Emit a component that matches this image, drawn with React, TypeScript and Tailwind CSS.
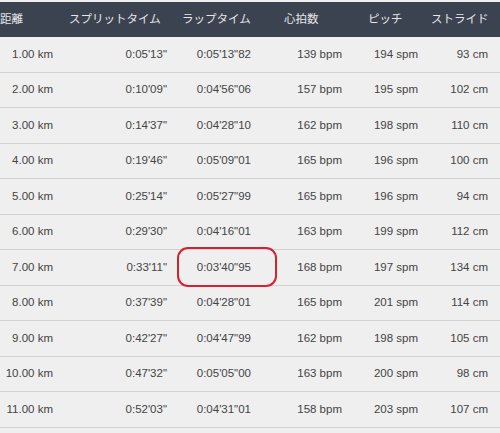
import React from "react";

const rows = [
  ["1.00 km", "0:05'13\"", "0:05'13\"82", "139 bpm", "194 spm", "93 cm"],
  ["2.00 km", "0:10'09\"", "0:04'56\"06", "157 bpm", "195 spm", "102 cm"],
  ["3.00 km", "0:14'37\"", "0:04'28\"10", "162 bpm", "198 spm", "110 cm"],
  ["4.00 km", "0:19'46\"", "0:05'09\"01", "165 bpm", "196 spm", "100 cm"],
  ["5.00 km", "0:25'14\"", "0:05'27\"99", "165 bpm", "196 spm", "94 cm"],
  ["6.00 km", "0:29'30\"", "0:04'16\"01", "163 bpm", "199 spm", "112 cm"],
  ["7.00 km", "0:33'11\"", "0:03'40\"95", "168 bpm", "197 spm", "134 cm"],
  ["8.00 km", "0:37'39\"", "0:04'28\"01", "165 bpm", "201 spm", "114 cm"],
  ["9.00 km", "0:42'27\"", "0:04'47\"99", "162 bpm", "198 spm", "105 cm"],
  ["10.00 km", "0:47'32\"", "0:05'05\"00", "163 bpm", "200 spm", "98 cm"],
  ["11.00 km", "0:52'03\"", "0:04'31\"01", "158 bpm", "203 spm", "107 cm"],
];

const dataPad = ["pr-[7px]", "pr-[8px]", "pr-[14px]", "pr-[8px]", "pr-[7px]", "pr-[12px]"];

export default function App() {
  return (
    <div
      className="w-[500px] h-[433px] overflow-hidden bg-[#efefef] pt-[2px]"
      style={{ fontFamily: '"Liberation Sans", Arial, "Noto Sans CJK JP", sans-serif' }}
    >
      <div className="grid grid-cols-[60px_115px_90px_85px_75px_75px] h-[35px] bg-[#3c4350] text-[#e6e6e6] text-[11.5px] items-center">
        <div className="pl-0">距離</div>
        <div className="pl-[9px]">スプリットタイム</div>
        <div className="pl-[7px]">ラップタイム</div>
        <div className="pl-[19px]">心拍数</div>
        <div className="pl-[18px]">ピッチ</div>
        <div className="pl-[6px]">ストライド</div>
      </div>
      {rows.map((r, i) => (
        <div
          key={i}
          className="grid grid-cols-[60px_115px_90px_85px_75px_75px] h-[35.5px] border-b border-[#d2d2d2] text-[11.5px] text-[#444] items-center"
        >
          {r.map((c, j) => (
            <div key={j} className={`text-right ${dataPad[j]} relative`}>
              {c}
              {i === 6 && j === 2 && (
                <div className="absolute left-[2px] top-[-12px] w-[100px] h-[40px] border-2 border-[#d42330] rounded-[11px]" />
              )}
            </div>
          ))}
        </div>
      ))}
    </div>
  );
}
